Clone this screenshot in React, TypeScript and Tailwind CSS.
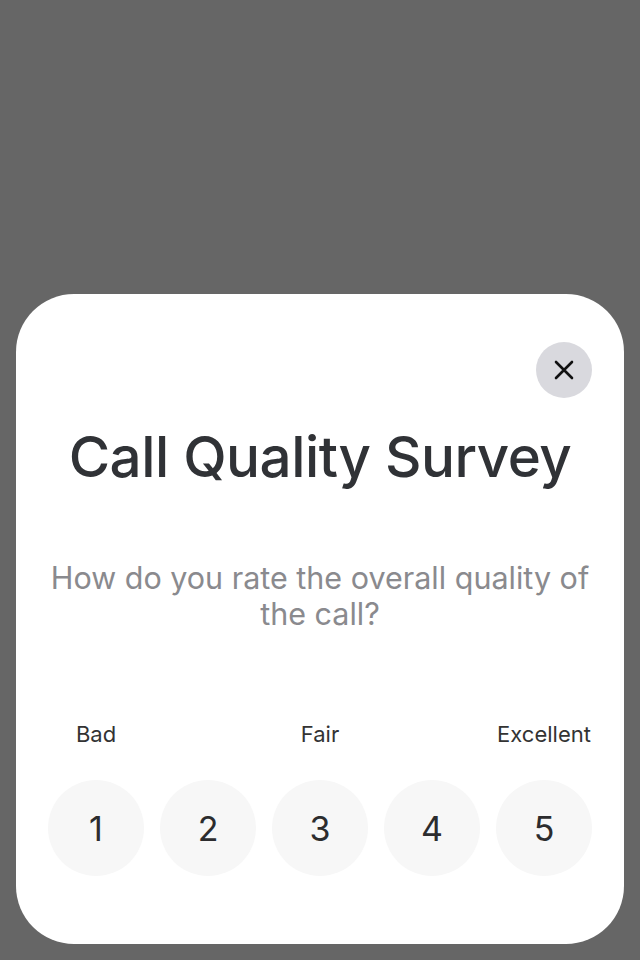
import React from "react";

export default function App() {
  const nums = [1, 2, 3, 4, 5];
  return (
    <div
      className="w-[640px] h-[960px] bg-[#666666] flex flex-col justify-end px-4 pb-4"
      style={{ fontFamily: "Inter, 'Noto Sans', sans-serif" }}
    >
      <div className="bg-white rounded-[58px] px-8 pt-12 pb-[68px] flex flex-col">
        <div className="flex justify-end">
          <button className="w-14 h-14 rounded-full bg-[#d9d9de] flex items-center justify-center">
            <svg width="22" height="22" viewBox="0 0 22 22" fill="none">
              <path d="M3 3L19 19M19 3L3 19" stroke="#111" strokeWidth="2.6" strokeLinecap="round" />
            </svg>
          </button>
        </div>
        <h1 className="mt-[25px] text-center text-[56.5px] leading-[68px] font-medium text-[#303236] tracking-[-0.5px]">
          Call Quality Survey
        </h1>
        <p className="mt-[69px] text-center text-[30.5px] leading-[36px] text-[#8a8a8e]">
          How do you rate the overall quality of the call?
        </p>
        <div className="mt-[88px] grid grid-cols-5 gap-4 text-[22px] leading-[28px] text-[#333333]">
          <div className="text-center">Bad</div>
          <div />
          <div className="text-center">Fair</div>
          <div />
          <div className="text-center whitespace-nowrap">Excellent</div>
        </div>
        <div className="mt-8 grid grid-cols-5 gap-4">
          {nums.map((n) => (
            <div
              key={n}
              className="h-24 rounded-full bg-[#f7f7f7] flex items-center justify-center text-[34px] text-[#2c2c2e]"
            >
              {n}
            </div>
          ))}
        </div>
      </div>
    </div>
  );
}
